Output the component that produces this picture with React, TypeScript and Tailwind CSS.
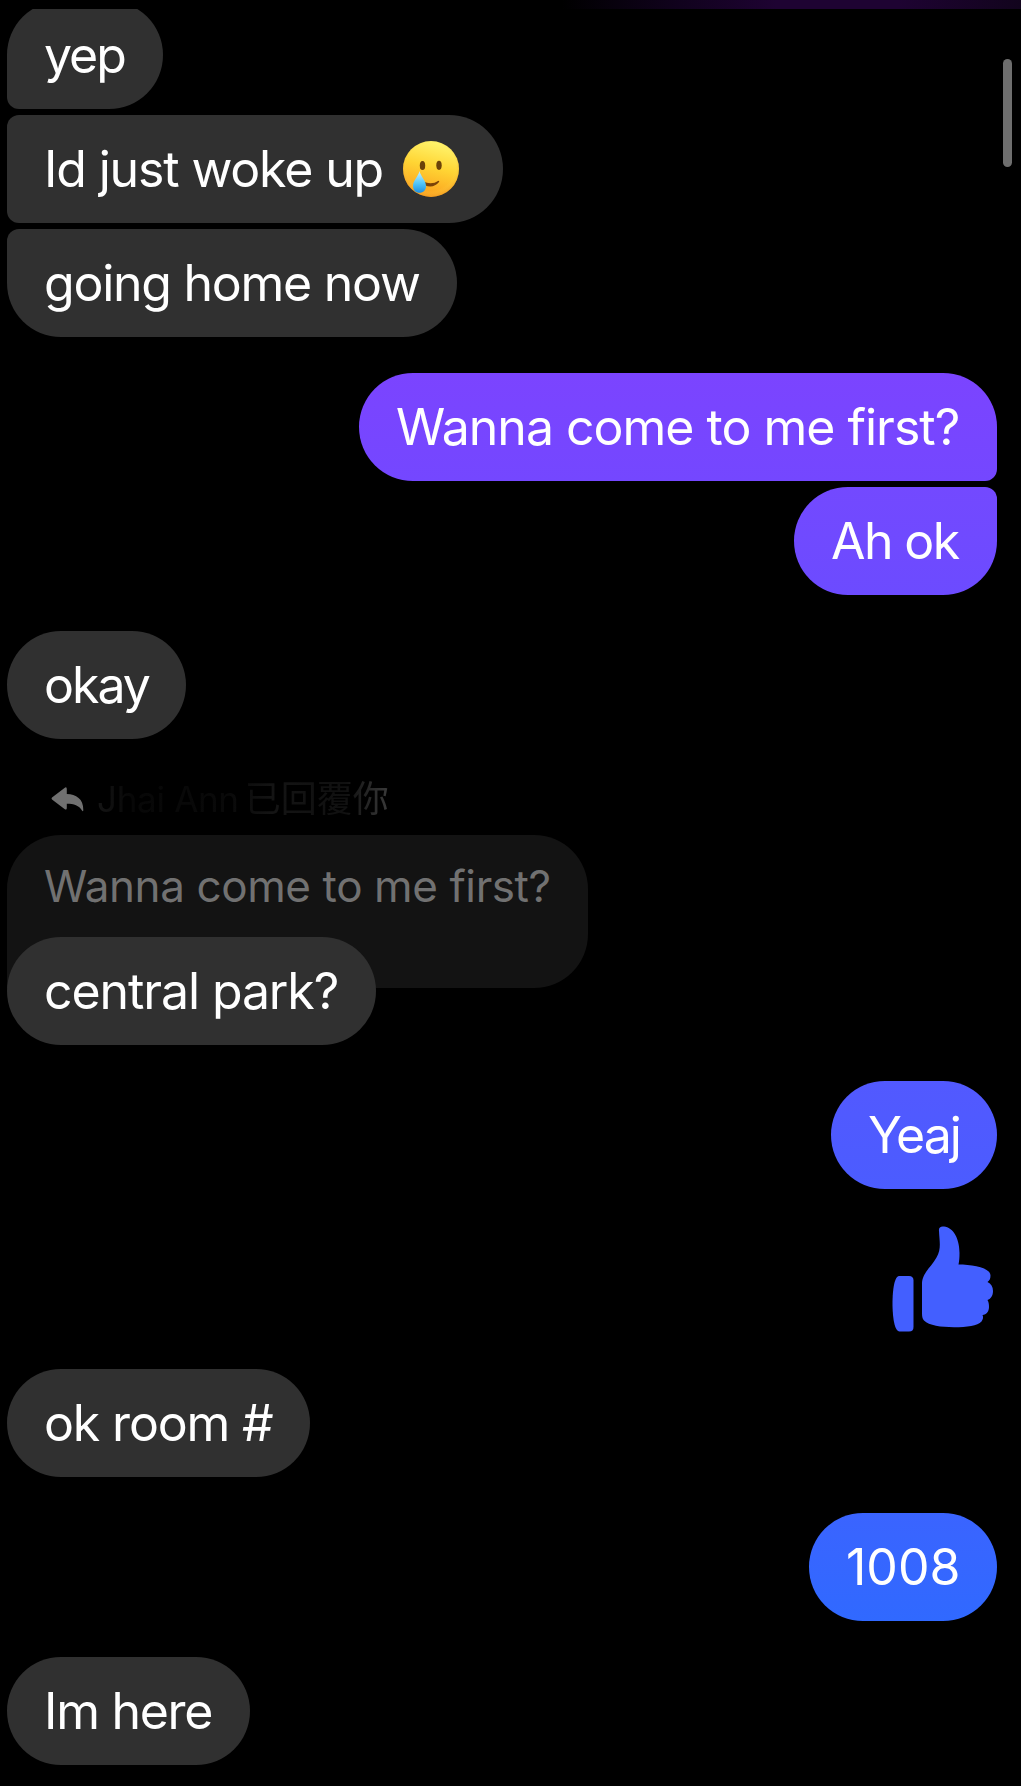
import React from 'react';

const Bubble = ({ className = '', children }: { className?: string; children: React.ReactNode }) => (
  <div className={`flex h-[108px] shrink-0 items-center rounded-[54px] px-[37px] text-[50px] leading-[60px] whitespace-pre text-white ${className}`}>
    {children}
  </div>
);

const TearFace = () => (
  <svg viewBox="0 0 56 56" className="ml-[20px] h-14 w-14 shrink-0">
    <defs>
      <linearGradient id="face" x1="0.6" y1="0" x2="0.35" y2="1">
        <stop offset="0" stopColor="#fff56e" />
        <stop offset="0.45" stopColor="#ffd534" />
        <stop offset="1" stopColor="#fb9c1c" />
      </linearGradient>
      <radialGradient id="shine" cx="0.5" cy="0.46" r="0.56">
        <stop offset="0.75" stopColor="#ffe45a" stopOpacity="0" />
        <stop offset="1" stopColor="#e98a17" stopOpacity="0.6" />
      </radialGradient>
      <linearGradient id="tear" x1="0" y1="0" x2="0" y2="1">
        <stop offset="0" stopColor="#c8f2ff" />
        <stop offset="0.55" stopColor="#55c8fb" />
        <stop offset="1" stopColor="#1f8fe0" />
      </linearGradient>
    </defs>
    <circle cx="28" cy="28" r="28" fill="url(#face)" />
    <circle cx="28" cy="28" r="28" fill="url(#shine)" />
    <ellipse cx="19.5" cy="24.5" rx="2.7" ry="4.6" fill="#6b420a" />
    <ellipse cx="36" cy="24.300" rx="2.7" ry="4.6" fill="#6b420a" />
    <path d="M22 43.500 Q30 47 35.500 40.500 Q30 44.500 22 42Z" fill="#7a4308" stroke="#7a4308" strokeWidth="1.400" strokeLinejoin="round" />
    <path d="M16.500 30 C15 36 10 39.500 10 45 C10 49 12.700 51.800 16.500 51.800 C20.300 51.800 23 49 23 45 C23 39.500 18 36 16.500 30Z" fill="url(#tear)" />
  </svg>
);

const ReplyArrow = () => (
  <svg viewBox="0 0 33 27" className="mt-[11px] h-[27px] w-[33px] shrink-0" fill="#707070">
    <path d="M1 11.500 L13.500 1.900 Q15.800 0.400 15.800 3 V8 C25 8 32.500 13 32.300 24 Q32.200 26.200 31 24.500 C28 19.500 23 17.800 15.800 17.800 V22 Q15.800 24.500 13.500 23 L1 13.500 Q0 12.500 1 11.500Z" />
  </svg>
);

const ThumbsUp = () => (
  <svg viewBox="0 0 102 107" className="h-[107px] w-[102px] shrink-0" fill="#435fff">
    <path d="M7 50 H17 Q21.500 50 21.500 54.500 V101 Q21.500 105.500 17 105.500 H7.500 C2.500 105.500 0.500 91 0.500 77.500 C0.500 64 2.500 50 7 50Z" />
    <path d="M47 5 C46.500 1.500 48.500 0 52 0.500 C61 1.500 67.500 12 67.500 27 C67.500 32 67.200 35 66.500 38.500 C80 38.500 98.500 41.500 98.500 49.500 C98.500 53 97.500 54.500 95.500 56 C99 57.500 101 60.500 101 65 C101 70 98.500 73 95.500 74 C96.700 76 97 78 97 81 C97 85.500 94.500 88.500 90.500 89 C91.500 91 91.200 93 89.500 95.500 C85.500 100 75 101.200 62 101.200 C49 101.200 37 99.500 32 94.500 C30.300 92.500 30 90 30 87 V58 C30 47 39 41.500 44.500 31.500 C49.500 23 47.500 16 47 5Z" />
  </svg>
);

export default function App() {
  return (
    <div className="relative flex h-[1786px] w-full flex-col overflow-hidden bg-black font-['Inter',sans-serif]">
      {/* bottom edge of the chat header */}
      <div className="h-[9px] shrink-0 bg-[linear-gradient(90deg,#000_0%,#000_55%,#10021c_66%,#1e0332_76%,#1e0332_88%,#12041d_100%)]" />

      <div className="flex min-h-0 flex-1 flex-col overflow-hidden pr-6 pl-[7px]">
        <div className="-mt-2 flex flex-col items-start gap-1.5">
          <Bubble className="w-[156px] rounded-bl-[12px] bg-[#303030] tracking-[-2px]">yep</Bubble>
          <Bubble className="w-[496px] rounded-l-[12px] bg-[#303030] tracking-[-1.15px]">
            Id just woke up
            <TearFace />
          </Bubble>
          <Bubble className="w-[450px] rounded-tl-[12px] bg-[#303030] tracking-[-1.25px]">going home now</Bubble>
        </div>

        <div className="mt-9 flex flex-col items-end gap-1.5">
          <Bubble className="w-[638px] rounded-br-[12px] bg-linear-to-b from-[#7b44ff] to-[#7447ff] tracking-[-1px]">Wanna come to me first?</Bubble>
          <Bubble className="w-[203px] rounded-tr-[12px] bg-linear-to-b from-[#7349ff] to-[#6c4bff] tracking-[-1.6px]">Ah ok</Bubble>
        </div>

        <div className="mt-9 flex flex-col items-start">
          <Bubble className="w-[179px] bg-[#303030] tracking-[-2px]">okay</Bubble>

          {/* reply label */}
          <div className="mt-9 flex h-[60px] items-start pl-[44px]">
            <ReplyArrow />
            <span className="-mt-[4px] ml-[13px] bg-[linear-gradient(90deg,#151515_0%,#070707_12%,#090909_45%,#141414_60%,#101010_85%,#3a3a3a_100%)] bg-clip-text text-[35px] leading-[50px] tracking-[-0.3px] whitespace-pre text-transparent">
              Jhai Ann<span className="ml-[6px] font-['Noto_Sans_CJK_TC',sans-serif] text-[36px] tracking-normal">已回覆你</span>
            </span>
          </div>

          <div className="flex h-[153px] w-[581px] rounded-[54px] rounded-bl-none bg-[#131313] px-[37px] pt-[21px] text-[44px] leading-[60px] tracking-[-0.4px] whitespace-pre text-[#717171]">
            <span>Wanna come to me first?</span>
          </div>
          <Bubble className="-mt-[51px] w-[369px] bg-[#303030] tracking-[-1.1px]">central park?</Bubble>
        </div>

        <div className="mt-9 flex flex-col items-end">
          <Bubble className="w-[166px] bg-linear-to-b from-[#5259ff] to-[#4b5cff] tracking-[-2px]">Yeaj</Bubble>
          <div className="mt-[37px] mr-[3px]">
            <ThumbsUp />
          </div>
        </div>

        <Bubble className="mt-9 w-[303px] self-start bg-[#303030] tracking-[-1.15px]">ok room #</Bubble>
        <Bubble className="mt-9 w-[188px] self-end bg-linear-to-b from-[#3a64ff] to-[#3069ff]">1008</Bubble>
        <Bubble className="mt-9 w-[243px] self-start bg-[#303030] tracking-[-1.3px]">Im here</Bubble>
      </div>

      {/* scroll indicator floating over the thread */}
      <div className="absolute top-[59px] right-[9px] h-[108px] w-[9px] rounded-full bg-[#6e6e6e]" />
    </div>
  );
}
